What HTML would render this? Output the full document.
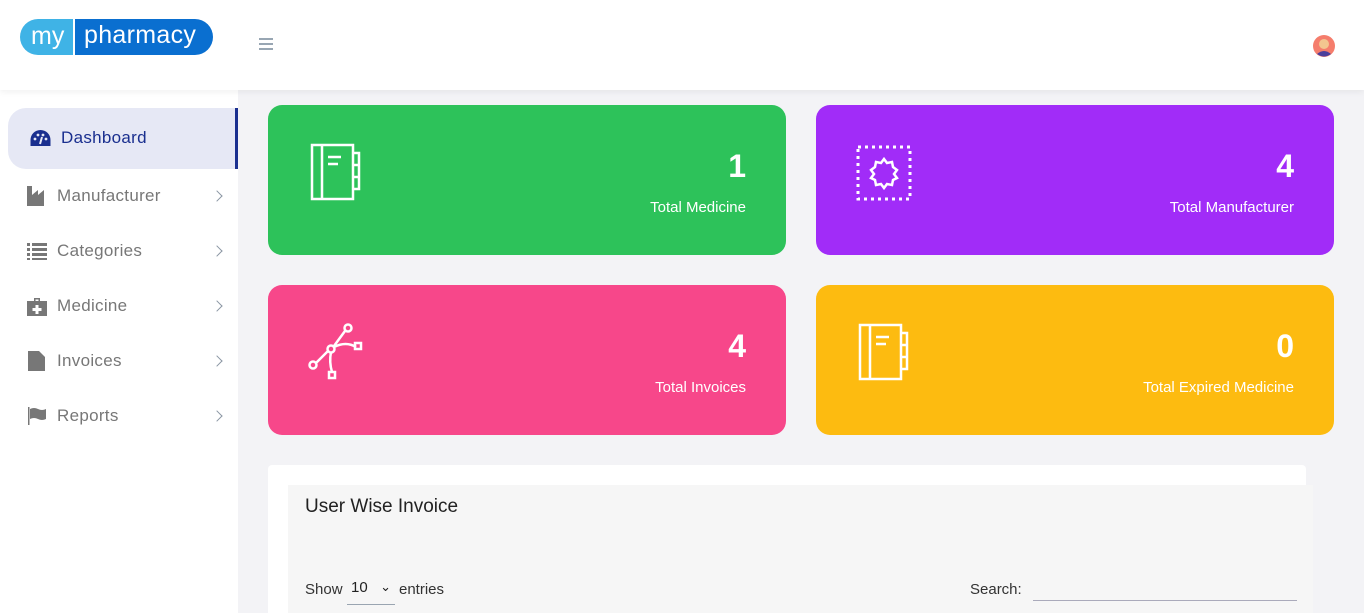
<!DOCTYPE html>
<html><head><style>
*{box-sizing:border-box;margin:0;padding:0}
html,body{width:1364px;height:613px;overflow:hidden}
body{background:#f3f3f6;font-family:"Liberation Sans",sans-serif;position:relative}
.hdr{position:absolute;left:0;top:0;width:1364px;height:90px;background:#fff;box-shadow:0 2px 6px rgba(0,0,0,.06);z-index:2}
.logo{position:absolute;left:20px;top:19px;height:36px;width:193px;display:flex;border-radius:18px;overflow:hidden}
.logo .a{background:#3fb3e6;color:#fff;font-size:25px;width:53px;padding-left:11px;line-height:34px}
.logo .b{flex:1;background:#0a6fd0;color:#fff;font-size:25px;padding-left:9px;line-height:32px;margin-left:2px;letter-spacing:.3px}
.ham{position:absolute;left:259px;top:38px;width:14px}
.ham i{display:block;height:2px;background:#98a6b3;margin-bottom:3px}
.side{position:absolute;left:0;top:90px;width:238px;height:523px;background:#fff}
.act{position:absolute;left:8px;top:18px;width:230px;height:61px;background:#e6e8f5;border-radius:18px 0 0 18px;border-right:3px solid #1a2f8f}
.it{position:absolute;left:27px;font-size:17px;color:#777;display:flex;align-items:center;letter-spacing:.3px}
.it svg{margin-right:10px}
.chev{position:absolute;left:216px;width:8px;height:8px;border-right:1.3px solid #8a96a3;border-top:1.3px solid #8a96a3;transform:rotate(45deg)}
.card{position:absolute;width:518px;height:150px;border-radius:14px;color:#fff}
.num{position:absolute;right:40px;top:43px;font-size:32px;font-weight:bold}
.lbl{position:absolute;right:40px;top:94px;font-size:15px}
.panel{position:absolute;left:268px;top:465px;width:1038px;height:160px;background:#fff;border-radius:4px}
.inner{position:absolute;left:20px;top:20px;width:1025px;height:140px;background:#f6f6f6}
</style></head><body>
<div class="hdr">
<div class="logo"><span class="a">my</span><span class="b">pharmacy</span></div>
<div class="ham"><i></i><i></i><i></i></div>
<svg style="position:absolute;left:1313px;top:35px" width="22" height="22" viewBox="0 0 22 22"><circle cx="11" cy="11" r="11" fill="#f57d6c"/><circle cx="11" cy="9" r="5" fill="#f3c58f"/><path d="M4 19q7-6 14 0q-7 5-14 0z" fill="#4b3f9c"/></svg>
</div>
<div class="side">
<div class="act"></div>
<div class="it" style="left:30px;top:38px;color:#1a2f8f"><svg width="21" height="18" viewBox="0 0 21 18"><path d="M10.5 1A10 10 0 0 0 .5 11v6h20v-6A10 10 0 0 0 10.5 1z" fill="#1a2f8f"/><circle cx="5" cy="10" r="1.4" fill="#e6e8f5"/><circle cx="8" cy="6" r="1.4" fill="#e6e8f5"/><circle cx="13" cy="6" r="1.4" fill="#e6e8f5"/><circle cx="16" cy="10" r="1.4" fill="#e6e8f5"/><path d="M10 15l2-7" stroke="#e6e8f5" stroke-width="2"/></svg>Dashboard</div>
<div class="it" style="top:96px"><svg width="20" height="20" viewBox="0 0 20 20"><path d="M0 0h5v9l6-5v5l6-5v16H0z" fill="#777"/></svg>Manufacturer</div><span class="chev" style="top:102px;left:213px"></span>
<div class="it" style="top:151px"><svg width="20" height="18" viewBox="0 0 20 18"><path d="M0 1h3v3H0zM5 1h15v3H5zM0 6h3v3H0zM5 6h15v3H5zM0 11h3v3H0zM5 11h15v3H5zM0 16h3v2H0zM5 16h15v2H5z" fill="#777"/></svg>Categories</div><span class="chev" style="top:157px;left:213px"></span>
<div class="it" style="top:206px"><svg width="20" height="19" viewBox="0 0 20 19"><path d="M7 1h6v3h7v15H0V4h7zM8.5 2.5v1.5h3V2.5z" fill="#777"/><path d="M8.5 8h3v3h3v3h-3v3h-3v-3h-3v-3h3z" fill="#fff"/></svg>Medicine</div><span class="chev" style="top:212px;left:213px"></span>
<div class="it" style="top:261px"><svg width="20" height="20" viewBox="0 0 20 20"><path d="M1 0h11l6 6v14H1z" fill="#777"/></svg>Invoices</div><span class="chev" style="top:267px;left:213px"></span>
<div class="it" style="top:316px"><svg width="20" height="20" viewBox="0 0 20 20"><path d="M1 1h1.5v18H1z" fill="#777"/><path d="M3 3q4-2 8 0t8 0v10q-4 2-8 0t-8 0z" fill="#777"/></svg>Reports</div><span class="chev" style="top:322px;left:213px"></span>
</div>

<div class="card" style="left:268px;top:105px;background:#2dc25a">
<svg style="position:absolute;left:42px;top:38px" width="52" height="58" viewBox="0 0 52 58" fill="none" stroke="#fff" stroke-width="2.5"><rect x="2" y="2" width="41" height="54"/><path d="M12 2v54M18 14h13M18 21h10M43 10h6v12h-6M43 22h6v12h-6M43 34h6v12h-6"/></svg>
<div class="num">1</div><div class="lbl">Total Medicine</div></div>
<div class="card" style="left:816px;top:105px;background:#a12cf8">
<svg style="position:absolute;left:40px;top:40px" width="56" height="56" viewBox="0 0 56 56" fill="none" stroke="#fff" stroke-width="3"><rect x="2" y="2" width="52" height="52" stroke-dasharray="3 4"/><path d="M28 14l3 4 5-1 1 5 4 3-3 4 3 4-4 2-1 5-5-1-3 4-3-4-5 1-1-5-4-2 3-4-3-4 4-3 1-5 5 1z" stroke-width="2.5"/></svg>
<div class="num">4</div><div class="lbl">Total Manufacturer</div></div>
<div class="card" style="left:268px;top:285px;background:#f7478a">
<svg style="position:absolute;left:38px;top:38px" width="60" height="60" viewBox="0 0 60 60" fill="none" stroke="#fff" stroke-width="2.5"><circle cx="42" cy="5" r="3.5"/><circle cx="25" cy="26" r="3.5"/><circle cx="7" cy="42" r="3.5"/><path d="M39 8L28 23M22 28L10 40M28 24q12-6 22 0M25 29q-2 10 1 20"/><rect x="49" y="20" width="6" height="6"/><rect x="23" y="49" width="6" height="6"/></svg>
<div class="num">4</div><div class="lbl">Total Invoices</div></div>
<div class="card" style="left:816px;top:285px;background:#fdbb10">
<svg style="position:absolute;left:42px;top:38px" width="52" height="58" viewBox="0 0 52 58" fill="none" stroke="#fff" stroke-width="2.5"><rect x="2" y="2" width="41" height="54"/><path d="M12 2v54M18 14h13M18 21h10M43 10h6v12h-6M43 22h6v12h-6M43 34h6v12h-6"/></svg>
<div class="num">0</div><div class="lbl">Total Expired Medicine</div></div>

<div class="panel"><div class="inner">
<div style="position:absolute;left:17px;top:11px;font-size:19px;color:#222">User Wise Invoice</div>
<div style="position:absolute;left:17px;top:96px;font-size:15px;color:#333">Show</div>
<div style="position:absolute;left:59px;top:94px;width:48px;height:26px;border-bottom:1px solid #9aa5b1;font-size:15px;color:#222;padding-left:4px">10<span style="position:absolute;right:4px;top:0;font-size:13px">&#x2304;</span></div>
<div style="position:absolute;left:111px;top:96px;font-size:15px;color:#333">entries</div>
<div style="position:absolute;left:682px;top:96px;font-size:15px;color:#333">Search:</div>
<div style="position:absolute;left:745px;top:94px;width:264px;height:22px;border-bottom:1px solid #aab"></div>
</div></div>
</body></html>
